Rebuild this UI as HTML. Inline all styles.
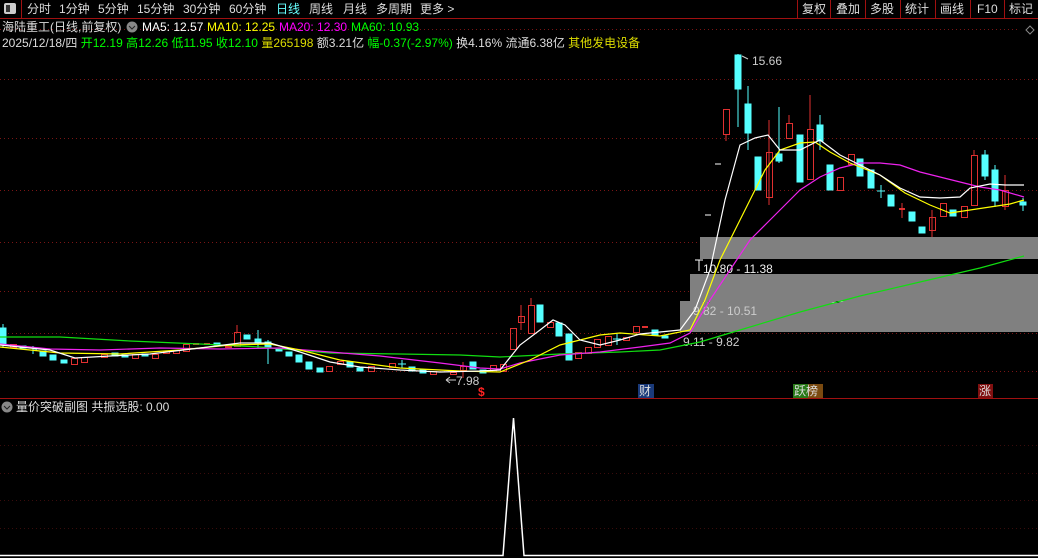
<!DOCTYPE html>
<html><head><meta charset="utf-8"><style>
html,body{margin:0;padding:0;background:#000;width:1038px;height:558px;overflow:hidden}
svg{display:block}
text{font-family:"Liberation Sans","Noto Sans CJK SC",sans-serif;font-size:12px}
</style></head><body>
<svg width="1038" height="558" xmlns="http://www.w3.org/2000/svg">
<rect width="1038" height="558" fill="#000"/>
<!-- top bar -->
<line x1="0" y1="18.5" x2="1038" y2="18.5" stroke="#a01010"/>
<line x1="21.5" y1="0" x2="21.5" y2="18" stroke="#a01010"/>
<rect x="4" y="3" width="12" height="11" fill="#ccc" rx="2"/><rect x="6" y="5" width="4" height="7" fill="#333"/>
<g fill="#ddd">
<text x="27" y="13">分时</text><text x="59" y="13">1分钟</text><text x="98" y="13">5分钟</text><text x="137" y="13">15分钟</text><text x="183" y="13">30分钟</text><text x="229" y="13">60分钟</text>
<text x="276" y="13" fill="#6ff">日线</text><text x="309" y="13">周线</text><text x="343" y="13">月线</text><text x="376" y="13">多周期</text><text x="420" y="13">更多 &gt;</text>
</g>
<g stroke="#a01010"><line x1="797.5" y1="0" x2="797.5" y2="18"/><line x1="830.5" y1="0" x2="830.5" y2="18"/><line x1="865.5" y1="0" x2="865.5" y2="18"/><line x1="900.5" y1="0" x2="900.5" y2="18"/><line x1="935.5" y1="0" x2="935.5" y2="18"/><line x1="970.5" y1="0" x2="970.5" y2="18"/><line x1="1004.5" y1="0" x2="1004.5" y2="18"/></g>
<g fill="#ddd"><text x="802" y="13">复权</text><text x="836" y="13">叠加</text><text x="870" y="13">多股</text><text x="905" y="13">统计</text><text x="940" y="13">画线</text><text x="977" y="13">F10</text><text x="1009" y="13">标记</text></g>
<!-- grid -->
<g stroke="#7a1515" stroke-dasharray="1,3">
<line x1="0" y1="29.5" x2="1020" y2="29.5"/><line x1="0" y1="79.5" x2="1038" y2="79.5"/><line x1="0" y1="138.5" x2="1038" y2="138.5"/><line x1="0" y1="190.5" x2="1038" y2="190.5"/><line x1="0" y1="242.5" x2="1038" y2="242.5"/><line x1="0" y1="291.5" x2="1038" y2="291.5"/><line x1="0" y1="333.5" x2="1038" y2="333.5"/><line x1="0" y1="371.5" x2="1038" y2="371.5"/>
</g>
<g stroke="#3a0c0c" stroke-dasharray="1,3">
<line x1="0" y1="445.5" x2="1038" y2="445.5"/><line x1="0" y1="473.5" x2="1038" y2="473.5"/><line x1="0" y1="500.5" x2="1038" y2="500.5"/><line x1="0" y1="528.5" x2="1038" y2="528.5"/>
</g>
<path d="M1030 26 l4 4 -4 4 -4 -4z" fill="none" stroke="#888"/>
<!-- info rows -->
<text x="2" y="31" fill="#ddd">海陆重工(日线,前复权)</text>
<circle cx="132" cy="27" r="5.5" fill="#888"/><path d="M129 26 l3 3 3 -3" stroke="#222" fill="none"/>
<text x="142" y="31" fill="#fff">MA5: 12.57</text>
<text x="207" y="31" fill="#ff0">MA10: 12.25</text>
<text x="279" y="31" fill="#f0f">MA20: 12.30</text>
<text x="351" y="31" fill="#0f0">MA60: 10.93</text>
<text x="2" y="47" fill="#ddd">2025/12/18/四 <tspan fill="#0f0">开12.19 高12.26 低11.95 收12.10</tspan> <tspan fill="#dd0">量</tspan><tspan fill="#dd0">265198</tspan> 额3.21亿 <tspan fill="#0f0">幅-0.37(-2.97%)</tspan> 换4.16% 流通6.38亿 <tspan fill="#dd0">其他发电设备</tspan></text>
<!-- boxes -->
<rect x="700" y="237" width="338" height="22" fill="#808080"/>
<rect x="690" y="274" width="348" height="27" fill="#808080"/>
<line x1="680" y1="302" x2="1038" y2="302" stroke="#fff"/>
<rect x="680" y="303" width="358" height="29" fill="#808080"/>
<text x="703" y="273" fill="#eee">10.80 - 11.38</text>
<path d="M695 260 h8 M699 260 v11" stroke="#fff"/>
<text x="693" y="315" fill="#ccc">9.82 - 10.51</text>
<text x="683" y="346" fill="#ccc">9.11 - 9.82</text>
<!-- candles -->
<g id="c"></g>
<g stroke-width="1">
<!-- cyan filled: x,top,bottom -->
<g fill="#5ff" stroke="#5ff">
<rect x="0" y="328" width="6" height="16"/><rect x="20" y="346" width="6" height="2"/><rect x="40" y="351" width="6" height="5"/><rect x="50" y="355" width="6" height="5"/><rect x="61" y="360" width="6" height="3"/><rect x="112" y="353" width="6" height="3"/><rect x="122" y="355" width="6" height="2"/><rect x="142" y="354" width="6" height="2"/><rect x="214" y="343" width="6" height="2"/><rect x="244" y="335" width="6" height="4"/><rect x="255" y="339" width="6" height="4"/><rect x="265" y="342" width="6" height="6"/><rect x="276" y="348" width="6" height="3"/><rect x="286" y="352" width="6" height="4"/><rect x="296" y="355" width="6" height="7"/><rect x="306" y="362" width="6" height="7"/><rect x="317" y="368" width="6" height="4"/><rect x="347" y="362" width="6" height="5"/><rect x="357" y="368" width="6" height="3"/><rect x="409" y="367" width="6" height="4"/><rect x="420" y="370" width="6" height="3"/><rect x="470" y="362" width="6" height="7"/><rect x="480" y="370" width="6" height="3"/>
<rect x="537" y="305" width="6" height="17"/><rect x="556" y="323" width="6" height="13"/><rect x="566" y="334" width="6" height="26"/><rect x="652" y="330" width="6" height="5"/><rect x="662" y="336" width="6" height="2"/>
<rect x="735" y="55" width="6" height="34"/><rect x="745" y="104" width="6" height="29"/><rect x="755" y="157" width="6" height="33"/><rect x="776" y="154" width="6" height="7"/><rect x="797" y="135" width="6" height="47"/><rect x="817" y="125" width="6" height="16"/><rect x="827" y="165" width="6" height="25"/><rect x="857" y="159" width="6" height="17"/><rect x="868" y="170" width="6" height="18"/><rect x="888" y="195" width="6" height="11"/><rect x="909" y="212" width="6" height="9"/><rect x="919" y="227" width="6" height="6"/><rect x="950" y="210" width="6" height="6"/><rect x="982" y="155" width="6" height="21"/><rect x="992" y="170" width="6" height="31"/><rect x="1020" y="202" width="6" height="3"/>
</g>
<g stroke="#5ff">
<line x1="3" y1="324" x2="3" y2="348"/><line x1="258" y1="330" x2="258" y2="348"/><line x1="268" y1="340" x2="268" y2="364"/><line x1="738" y1="54" x2="738" y2="127"/><line x1="748" y1="86" x2="748" y2="150"/><line x1="779" y1="107" x2="779" y2="163"/><line x1="820" y1="115" x2="820" y2="150"/><line x1="881" y1="185" x2="881" y2="198"/><line x1="877" y1="191" x2="885" y2="191"/><line x1="985" y1="150" x2="985" y2="180"/><line x1="995" y1="165" x2="995" y2="207"/><line x1="1023" y1="198" x2="1023" y2="211"/><line x1="617" y1="334" x2="617" y2="345"/><line x1="613" y1="339" x2="621" y2="339"/><line x1="33" y1="346" x2="33" y2="354"/><line x1="29" y1="350" x2="37" y2="350"/><line x1="402" y1="360" x2="402" y2="368"/><line x1="398" y1="364" x2="406" y2="364"/>
</g>
<!-- red hollow -->
<g fill="none" stroke="#e03030">
<rect x="10.5" y="344.5" width="6" height="3"/><rect x="71.5" y="358.5" width="6" height="6"/><rect x="81.5" y="357.5" width="6" height="5"/><rect x="101.5" y="354.5" width="6" height="3"/><rect x="132.5" y="354.5" width="6" height="4"/><rect x="152.5" y="354.5" width="6" height="4"/><rect x="163.5" y="351.5" width="6" height="2"/><rect x="173.5" y="350.5" width="6" height="3"/><rect x="183.5" y="344.5" width="6" height="7"/><rect x="225.5" y="346.5" width="6" height="1"/><rect x="234.5" y="332.5" width="6" height="14"/><rect x="326.5" y="366.5" width="6" height="5"/><rect x="337.5" y="361.5" width="6" height="3"/><rect x="368.5" y="366.5" width="6" height="5"/><rect x="389.5" y="363.5" width="6" height="4"/><rect x="430.5" y="371.5" width="6" height="3"/><rect x="450.5" y="372.5" width="6" height="2"/><rect x="460.5" y="366.5" width="6" height="4"/><rect x="490.5" y="365.5" width="6" height="5"/><rect x="500.5" y="364.5" width="6" height="7"/>
<rect x="510.5" y="328.5" width="6" height="21"/><rect x="518.5" y="316.5" width="6" height="6"/><rect x="528.5" y="305.5" width="6" height="28"/><rect x="547.5" y="322.5" width="6" height="5"/><rect x="575.5" y="352.5" width="6" height="6"/><rect x="585.5" y="347.5" width="6" height="6"/><rect x="594.5" y="339.5" width="6" height="8"/><rect x="605.5" y="336.5" width="6" height="9"/><rect x="623.5" y="337.5" width="6" height="3"/><rect x="633.5" y="326.5" width="6" height="6"/>
<rect x="723.5" y="109.5" width="6" height="25"/><rect x="766.5" y="152.5" width="6" height="45"/><rect x="786.5" y="123.5" width="6" height="15"/><rect x="807.5" y="129.5" width="6" height="50"/><rect x="837.5" y="177.5" width="6" height="13"/><rect x="848.5" y="154.5" width="6" height="10"/><rect x="929.5" y="217.5" width="6" height="13"/><rect x="940.5" y="203.5" width="6" height="13"/><rect x="961.5" y="206.5" width="6" height="11"/><rect x="971.5" y="155.5" width="6" height="50"/><rect x="1002.5" y="190.5" width="6" height="16"/>
<line x1="237" y1="325" x2="237" y2="332"/><line x1="726" y1="135" x2="726" y2="141"/><line x1="769" y1="120" x2="769" y2="205"/><line x1="789" y1="115" x2="789" y2="123"/><line x1="810" y1="95" x2="810" y2="129"/><line x1="932" y1="210" x2="932" y2="237"/><line x1="974" y1="150" x2="974" y2="155"/><line x1="1005" y1="175" x2="1005" y2="210"/><line x1="531" y1="298" x2="531" y2="305"/><line x1="521" y1="305" x2="521" y2="330"/><line x1="463" y1="362" x2="463" y2="378"/>
</g>
<g fill="#e03030"><rect x="193" y="343" width="6" height="2"/><rect x="204" y="343" width="6" height="2"/><rect x="642" y="326" width="6" height="2"/><rect x="899" y="208" width="6" height="2"/><line x1="902" y1="203" x2="902" y2="218" stroke="#e03030"/></g>
</g>
<!-- MAs -->
<g fill="none" stroke-width="1.2">
<polyline stroke="#1d1" points="0,337 60,337 130,341 200,344 260,347 330,353 400,354 460,355 500,357 560,354 620,352 660,350 700,342 740,330 800,312 860,296 920,282 980,268 1024,256"/>
<polyline stroke="#e2e" points="0,344 50,349 100,350 160,348 220,349 280,348 330,352 380,356 440,363 480,368 500,369 520,363 560,355 600,352 640,347 670,343 690,333 710,300 730,270 750,240 770,220 790,200 800,190 820,177 840,168 860,163 880,163 900,165 920,172 940,177 960,182 980,187 1000,190 1024,197"/>
<polyline stroke="#ff0" points="0,347 60,353 120,354 180,350 230,345 270,344 300,350 340,360 400,368 460,371 500,372 530,360 560,345 600,335 620,333 660,336 690,330 705,300 720,260 735,230 750,200 765,170 780,150 800,143 815,142 830,152 850,163 880,175 905,193 930,205 950,213 970,210 990,207 1010,204 1024,200"/>
<polyline stroke="#fff" points="0,345 50,350 75,358 110,356 150,354 200,348 240,343 270,343 300,352 330,362 360,367 400,370 440,372 480,371 500,370 520,345 540,330 553,320 565,325 580,340 600,345 620,340 640,334 660,332 680,330 695,310 710,270 725,200 740,145 755,138 768,135 780,150 800,150 820,140 840,155 860,165 880,175 900,188 920,197 940,198 960,197 970,188 990,184 1005,185 1024,185"/>
</g>
<path d="M715 164h6 M705 215h6" stroke="#fff"/>
<path d="M742 56 l6 3" stroke="#ccc"/>
<text x="752" y="65" fill="#ccc">15.66</text>
<path d="M456 380 l-10 0 M446 380 l4 -3 M446 380 l4 3" stroke="#ccc"/>
<text x="456" y="385" fill="#ccc">7.98</text>
<!-- markers -->
<text x="478" y="396" fill="#f22" font-weight="bold">$</text>
<rect x="638" y="384" width="16" height="14" fill="#1a3a7a"/><text x="639" y="395" fill="#ddd">财</text>
<rect x="793" y="384" width="15" height="14" fill="#2a7a1a"/><rect x="808" y="384" width="15" height="14" fill="#7a4a10"/><text x="794" y="395" fill="#ddd">跃榜</text>
<rect x="978" y="384" width="15" height="14" fill="#801010"/><text x="979" y="395" fill="#ddd">涨</text>
<line x1="0" y1="398.5" x2="1038" y2="398.5" stroke="#a01010"/>
<!-- lower panel -->
<circle cx="7" cy="407" r="5.5" fill="#888"/><path d="M4 406 l3 3 3 -3" stroke="#222" fill="none"/>
<text x="16" y="411" fill="#ddd">量价突破副图 共振选股: 0.00</text>
<path d="M0 555.5 H503 L513.5 418 L524 555.5 H1038" stroke="#fff" fill="none" stroke-width="1.5"/>
</svg>
</body></html>
